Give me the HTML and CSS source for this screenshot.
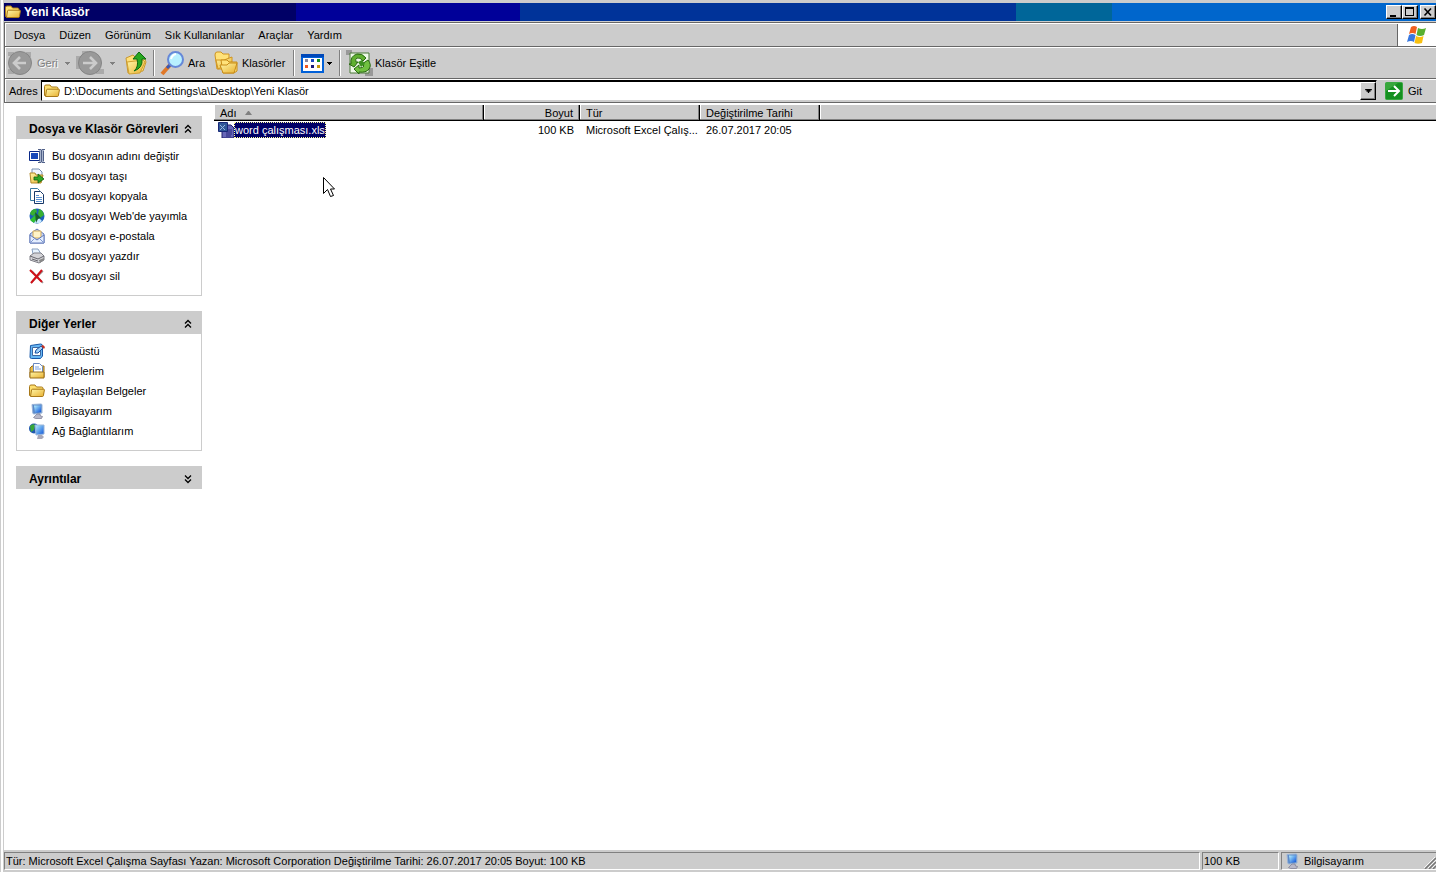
FILE: index.html
```html
<!DOCTYPE html>
<html lang="tr">
<head>
<meta charset="utf-8">
<title>Yeni Klasör</title>
<link rel="stylesheet" href="styles.css">
</head>
<body>
<svg class="defs" aria-hidden="true">
  <defs>
    <linearGradient id="gold" x1="0" y1="0" x2="1" y2="1"><stop offset="0" stop-color="#fff6a8"/><stop offset="1" stop-color="#e8b030"/></linearGradient>
    <linearGradient id="screen" x1="0" y1="0" x2="1" y2="1"><stop offset="0" stop-color="#b8f4ff"/><stop offset="1" stop-color="#0a50d8"/></linearGradient>
    <symbol id="folder" viewBox="0 0 16 16">
      <path d="M.500 3.500q0-1.500 1.500-1.500h4l1.500 2h5q1.500 0 1.500 1.500v7h-13.500z" fill="#ffe070" stroke="#a87818"/>
      <path d="M1.500 13.500l1-6.500q.2-.8 1-.8h11q1 0 .9.8l-1 5.700q-.2.8-1 .8z" fill="url(#gold)" stroke="#a87818"/>
    </symbol>
    <symbol id="folders" viewBox="0 0 24 24">
      <path d="M1 4q0-3 2-3h4l2 2h6v3l-3 12h-9z" fill="#ffe27a" stroke="#d09420"/>
      <path d="M4 18l-2-9h8l8-3v5z" fill="url(#gold)" stroke="#d09420"/>
      <path d="M7 9h6l2 2h8v9l-3 2h-11z" fill="#ffe27a" stroke="#c88c18"/>
      <path d="M6 14h7l2-2h8l-3 10h-11z" fill="url(#gold)" stroke="#c88c18"/>
    </symbol>
    <symbol id="computer" viewBox="0 0 16 16">
      <path d="M3 1.500l9-.5q1 0 1 1v8l-8 1q-1 0-1.200-1z" fill="#5a88c8" stroke="#98b4d8"/>
      <path d="M5 2.500h7v6.500l-6 .8z" fill="url(#screen)"/>
      <path d="M8 11h3l.5 2 2 .5-1 2h-6l-2-1z" fill="#b8b8c8" stroke="#787890" stroke-width=".7"/>
    </symbol>
    <symbol id="up" viewBox="0 0 10 10"><path d="M2 4.500l3-3 3 3M2 8.500l3-3 3 3" fill="none" stroke="#000" stroke-width="1.300"/></symbol>
    <symbol id="down" viewBox="0 0 10 10"><path d="M2 1.500l3 3 3-3M2 5.500l3 3 3-3" fill="none" stroke="#000" stroke-width="1.300"/></symbol>
    <symbol id="tri" viewBox="0 0 5 3"><path d="M0 0h5v1h-1v1h-1v1h-1v-1h-1v-1h-1z" fill="currentColor"/></symbol>
  </defs>
</svg>
<div class="window">
  <header class="titlebar">
    <svg class="i16"><use href="#folder"/></svg>
    <h1>Yeni Klasör</h1>
    <div class="controls">
      <button aria-label="Küçült"><svg viewBox="0 0 10 10"><path d="M1 8h6v2h-6z"/></svg></button>
      <button aria-label="Ekranı kapla"><svg viewBox="0 0 10 10"><path d="M0 0h9v9h-9zM1 2v6h7v-6z" fill-rule="evenodd"/></svg></button>
      <button class="close" aria-label="Kapat"><svg viewBox="0 0 10 10"><path d="M1.500 1.500l6.500 7M8 1.500l-6.500 7" fill="none" stroke="#000" stroke-width="1.600"/></svg></button>
    </div>
  </header>
  <div class="frame">
    <nav class="menubar">
      <button>Dosya</button><button>Düzen</button><button>Görünüm</button><button>Sık Kullanılanlar</button><button>Araçlar</button><button>Yardım</button>
      <div class="flag">
        <svg width="20" height="20" viewBox="0 0 20 20"><path d="M4 2q3-2 6 0l-1.500 7q-3-2-6.500 0z" fill="#f06020"/><path d="M11 3q4 2 8 0l-2 7q-4 2-7.500 0z" fill="#58b030"/><path d="M2 10q3-2 6.500 0l-1.500 7q-3-2-7 0z" fill="#3878e0"/><path d="M9 11q4 2 7.500 0l-1.500 7q-4 1.500-7.500 0z" fill="#f8c010"/></svg>
      </div>
    </nav>
    <div class="toolbar">
      <button class="tool off back" disabled><svg class="i26" viewBox="0 0 26 26"><path d="M1 2h6v4h-6zM19 2h5v5h-5zM1 19h6v5h-6z" fill="#aaa"/><circle cx="13" cy="13" r="11.500" fill="#999" stroke="#858585"/><path d="M19 13h-12M13 7l-6 6 6 6" fill="none" stroke="#ccc" stroke-width="2.600"/></svg><span>Geri</span><svg class="tri"><use href="#tri"/></svg></button>
      <button class="tool off fwd" aria-label="İleri" disabled><svg class="i28" viewBox="0 0 28 28"><path d="M0 7h6v-5h6v4h-4v14h-8z" fill="#aaa"/><path d="M20 20h8v5h-8z" fill="#aaa"/><circle cx="14" cy="14" r="11.500" fill="#999" stroke="#858585"/><path d="M7 14h13M14 8l6 6-6 6" fill="none" stroke="#ccc" stroke-width="2.600"/></svg><svg class="tri"><use href="#tri"/></svg></button>
      <button class="tool up" aria-label="Yukarı"><svg class="i24" viewBox="0 0 24 24"><path d="M2 7l7-3 3 3 8-1 2 5-3 9-15 2z" fill="#ffe078" stroke="#c89830"/><path d="M3 11l16-2 2 2-5 11-11 1z" fill="url(#gold)" stroke="#d0a030"/><path d="M10 20q5-4 3-12h-4l6-7 7 7h-4q1 9-8 12z" fill="#28a820" stroke="#0a6810"/></svg></button>
      <i class="sep"></i>
      <button class="tool search"><svg class="i26" viewBox="0 0 26 26"><path d="M10 15l-8 9" stroke="#e07828" stroke-width="4"/><path d="M11 14l-4 4" stroke="#3858b8" stroke-width="3"/><circle cx="15.500" cy="9.500" r="7.500" fill="#b8f0ff" stroke="#6688d8" stroke-width="2"/><path d="M11 9q1-4 5-5" fill="none" stroke="#fff" stroke-width="2"/></svg><span>Ara</span></button>
      <button class="tool list"><svg class="i24"><use href="#folders"/></svg><span>Klasörler</span></button>
      <i class="sep"></i>
      <button class="tool views" aria-label="Görünümler"><svg class="i24" viewBox="0 0 24 24"><path d="M1 3h23v19h-23z" fill="#0060d8"/><path d="M1 3h23v3h-23z" fill="#0048b8"/><path d="M3 7h19v13h-19z" fill="#fff"/><path d="M5 8h3v3h-3z" fill="#8888a0"/><path d="M11 8h3v3h-3z" fill="#1848c0"/><path d="M17 8h3v3h-3z" fill="#109020"/><path d="M5 14h3v3h-3z" fill="#f05820"/><path d="M11 14h3v3h-3z" fill="#181878"/><path d="M17 14h3v3h-3z" fill="#c89808"/></svg><svg class="tri"><use href="#tri"/></svg></button>
      <i class="sep"></i>
      <button class="tool sync"><svg class="i28" viewBox="0 0 28 28"><path d="M0 1h6v5h-6zM19 19h8v8h-8z" fill="#999"/><path d="M4 4h19v20h-19z" fill="#eef8e8" stroke="#4a7838"/><path d="M5 15q-1-8 6-10 5-1 9 4l-3 3q-3-4-6-3-2 1-1 4l2 0-4 5-5-3z" fill="#60b030" stroke="#286810"/><path d="M22 11q4 5 1 9-3 4-10 3l0 2-5-5 5-4v3q4 0 5-2l-2-2z" fill="#70c040" stroke="#286810"/><path d="M12 13l4-2 3 4-4 3z" fill="#3c9020"/></svg><span>Klasör Eşitle</span></button>
    </div>
    <form class="address">
      <label for="addr">Adres</label>
      <div class="combo">
        <svg class="i16"><use href="#folder"/></svg>
        <input id="addr" type="text" value="D:\Documents and Settings\a\Desktop\Yeni Klasör">
        <button type="button" class="drop" aria-label="Adres listesi"><svg class="tri big"><use href="#tri"/></svg></button>
      </div>
      <button type="button" class="go"><svg width="18" height="18" viewBox="0 0 18 18"><rect x=".5" y=".5" width="17" height="17" rx="1" fill="#159020" stroke="#38a840"/><path d="M1 1h12l-12 8z" fill="#50b850" opacity=".6"/><path d="M3 9h11M9 4l5 5-5 5" fill="none" stroke="#fff" stroke-width="2"/></svg><span>Git</span></button>
    </form>
  </div>
  <div class="body">
    <aside class="side">
      <section class="card">
        <h2>Dosya ve Klasör Görevleri<button aria-label="Daralt"><svg><use href="#up"/></svg></button></h2>
        <ul>
          <li><a href="#"><svg class="i16" viewBox="0 0 16 16"><path d="M.5 3.500h11v9h-11z" fill="#fff" stroke="#0a2888"/><path d="M2 5h7v6h-7z" fill="#1848b8"/><path d="M10 2h5v12h-5z" fill="#a8b4cc"/><path d="M9 1.500h3l.5.5.5-.5h3M12.500 2v12M9 14.500h3l.5-.5.5.5h3M10.500 3v10M14.500 3v10" fill="none" stroke="#506088"/></svg>Bu dosyanın adını değiştir</a></li>
          <li><a href="#"><svg class="i16" viewBox="0 0 16 16"><path d="M3 1h7l3 3v7h-10z" fill="#eef4ff" stroke="#7890b0"/><path d="M1 5h5l1 2h7l-2 8h-10z" fill="url(#gold)" stroke="#b08828"/><path d="M5 9h4v-3l6 5-6 4v-3h-4z" fill="#30a828" stroke="#106010" stroke-width=".8"/></svg>Bu dosyayı taşı</a></li>
          <li><a href="#"><svg class="i16" viewBox="0 0 16 16"><path d="M1.500.500h7l2 2v10h-9z" fill="#fff" stroke="#3878a0"/><path d="M5.500 3.500h6l3 3v9h-9z" fill="#fff" stroke="#183868"/><path d="M7 7.500h3M7 9.500h6M7 11.500h6M7 13.500h6" stroke="#5890d0"/></svg>Bu dosyayı kopyala</a></li>
          <li><a href="#"><svg class="i16" viewBox="0 0 16 16"><circle cx="8" cy="8" r="7.500" fill="#1c60b8"/><path d="M1 6q1-5 6-5l1 3-4 4zM10 1q4 1 5 6l-4 3-2-4z" fill="#38b030"/><path d="M1 12l6-6 2 3-4 6z" fill="#30c030"/><path d="M5 15l4-6 4 4-2 2z" fill="#c8e8ff"/><path d="M6 4l6 6-3 1-2 4z" fill="#186028"/></svg>Bu dosyayı Web'de yayımla</a></li>
          <li><a href="#"><svg class="i16" viewBox="0 0 16 16"><path d="M1 6l7-5 7 5v9h-14z" fill="#c8d8f8" stroke="#6078b8"/><path d="M4 3h8v7h-8z" fill="#fff4c8" stroke="#d0a858"/><path d="M1 7l7 5 7-5v8h-14z" fill="#e4eeff" stroke="#6078b8"/><path d="M1 15l5-5M15 15l-5-5" stroke="#8098d0"/></svg>Bu dosyayı e-postala</a></li>
          <li><a href="#"><svg class="i16" viewBox="0 0 16 16"><path d="M4 6l-1-5h6l3 5z" fill="#e8f4ff" stroke="#88a0c0"/><path d="M1 8l4-3h7l3 3v4l-5 3-9-3z" fill="#d4d4d8" stroke="#808088"/><path d="M1 8l8 3 6-3M3 11l6 2" fill="none" stroke="#68686f"/><path d="M10 12l5-2v2l-4 3z" fill="#888"/></svg>Bu dosyayı yazdır</a></li>
          <li><a href="#"><svg class="i16" viewBox="0 0 16 16"><path d="M3 3l11 12M14 3l-12 12" stroke="#989898" stroke-width="1.500"/><path d="M1 2l12 12M13 2l-11 13" stroke="#d01018" stroke-width="2"/></svg>Bu dosyayı sil</a></li>
        </ul>
      </section>
      <section class="card">
        <h2>Diğer Yerler<button aria-label="Daralt"><svg><use href="#up"/></svg></button></h2>
        <ul>
          <li><a href="#"><svg class="i16" viewBox="0 0 16 16"><path d="M1.500 2.500l10-1.500q2 0 2 2v10l-2 2.500h-9q-1.500 0-1.500-1.500z" fill="#68b8f4" stroke="#1858a8"/><path d="M3.500 4.500h8v8h-8z" fill="#fff" stroke="#4068a0"/><path d="M6 10l1-3 5-4 2 2-5 5z" fill="#a0d0f8" stroke="#1850a0"/><path d="M12 3l2-1 2 2-1 2z" fill="#c83020"/></svg>Masaüstü</a></li>
          <li><a href="#"><svg class="i16" viewBox="0 0 16 16"><path d="M1 5l2-2h12v11h-14z" fill="#e8bc48" stroke="#986c18"/><path d="M4.500.500h6l3 3v7h-9z" fill="#fff" stroke="#6888c0"/><path d="M6 4h4M6 6h6" stroke="#78a0e0"/><path d="M1 9h14v6h-14z" fill="url(#gold)" stroke="#986c18"/></svg>Belgelerim</a></li>
          <li><a href="#"><svg class="i16"><use href="#folder"/></svg>Paylaşılan Belgeler</a></li>
          <li><a href="#"><svg class="i16"><use href="#computer"/></svg>Bilgisayarım</a></li>
          <li><a href="#"><svg class="i16" viewBox="0 0 16 16"><circle cx="5" cy="5.500" r="5" fill="#2058b0"/><path d="M1 3q3-3 5-1l-1 5-3 2z" fill="#38a838"/><path d="M6 2h9v9l-8 1z" fill="url(#screen)" stroke="#98b4d8"/><path d="M9 12h4l2 2-2 2h-5z" fill="#a8a8b8"/></svg>Ağ Bağlantılarım</a></li>
        </ul>
      </section>
      <section class="card">
        <h2>Ayrıntılar<button aria-label="Genişlet"><svg><use href="#down"/></svg></button></h2>
      </section>
    </aside>
    <main class="files">
      <table>
        <colgroup><col class="c1"><col class="c2"><col class="c3"><col class="c4"><col></colgroup>
        <thead><tr><th>Adı<svg class="sort" viewBox="0 0 7 4"><path d="M3 0h1l3 4h-7z" fill="#808080"/></svg></th><th class="num">Boyut</th><th>Tür</th><th>Değiştirilme Tarihi</th><th class="rest"></th></tr></thead>
        <tbody><tr>
          <td><div class="file"><svg class="i16" viewBox="0 0 16 16"><path d="M4 3h9l3 3v10h-12z" fill="#6868b8" stroke="#20206c"/><path d="M8 8h6M8 10h6M8 12h6M8 14h5" stroke="#28287c"/><path d="M.500.500h9v9h-9z" fill="#305898" stroke="#182878"/><path d="M2 3l5 5M7 3l-5 5" stroke="#98b8e0"/></svg><span class="name">word çalışması.xls</span></div></td>
          <td class="num">100 KB</td><td class="kind">Microsoft Excel Çalış...</td><td>26.07.2017 20:05</td><td></td>
        </tr></tbody>
      </table>
      <svg class="cursor" viewBox="0 0 13 21"><path d="M.500.500v16l4-4 3 7 3-1-3-6.500h4z" fill="#fff" stroke="#000"/></svg>
    </main>
  </div>
  <footer class="status">
    <div class="grow">Tür: Microsoft Excel Çalışma Sayfası Yazan: Microsoft Corporation Değiştirilme Tarihi: 26.07.2017 20:05 Boyut: 100 KB</div>
    <div class="size">100 KB</div>
    <div class="zone"><svg class="i16"><use href="#computer"/></svg><span>Bilgisayarım</span><svg class="grip" viewBox="0 0 12 12"><path d="M1 12l11-11M5 12l7-7M9 12l3-3" stroke="#777" stroke-width="1.500"/><path d="M0 11l11-11M4 11l8-8M8 11l4-4" stroke="#fff" stroke-width=".8"/></svg></div>
  </footer>
</div>
</body>
</html>
```

FILE: styles.css
```css
* { box-sizing: border-box; }
body { margin: 0; background: #fff; color: #000; font: 11px/16px "Liberation Sans", Arial, sans-serif; }
button, input { font: inherit; color: inherit; margin: 0; padding: 0; border: 0; background: none; border-radius: 0; }
svg { display: block; flex: none; }
.defs { position: absolute; width: 0; height: 0; }
.i16 { width: 16px; height: 16px; }
.i24 { width: 24px; height: 24px; }
.i26 { width: 26px; height: 26px; }
.i28 { width: 28px; height: 28px; }
.tri { width: 5px; height: 3px; }
.tri.big { width: 7px; height: 4px; }

.window { min-height: 100vh; display: flex; flex-direction: column; border-left: 4px double #ccc; }
.titlebar { display: flex; align-items: center; gap: 3px; height: 21px; padding-left: 1px; border-top: 3px solid #ccc; color: #fff; background: linear-gradient(90deg, #006 292px, #009 292px 516px, #039 516px 1012px, #069 1012px 1108px, #06c 1108px); }
h1 { margin: 0; flex: 1; font-size: 12px; line-height: 18px; }
.controls { display: flex; }
.controls button { width: 16px; height: 14px; padding: 1px 2px; background: #ccc; border: 1px solid; border-color: #fff #000 #000 #fff; box-shadow: inset -1px -1px #808080; }
.controls .close { margin-left: 2px; }
.controls svg { width: 10px; height: 10px; }

.frame { background: #ccc; padding-top: 1px; }
.menubar, .toolbar, .address { display: flex; align-items: center; border-top: 1px solid #666; border-left: 1px solid #666; box-shadow: inset 1px 1px #fff; }
.menubar { height: 24px; padding: 1px 0 0 2px; }
.menubar button { padding: 0 7px; }
.flag { margin-left: auto; align-self: stretch; width: 39px; display: flex; align-items: center; justify-content: center; background: #fff; border-left: 1px solid #666; }
.toolbar { height: 32px; padding: 1px 0 0 2px; }
.tool { display: flex; align-items: center; height: 28px; }
.off { color: #808080; text-shadow: 1px 1px #fff; }
.back { gap: 4px; width: 69px; }
.back .tri { margin-left: 3px; }
.fwd { gap: 6px; width: 48px; }
.up { width: 27px; }
.sep { width: 2px; height: 26px; margin: 0 5px 0 2px; border-left: 1px solid #808080; background: #fff; }
.search { gap: 2px; width: 54px; }
.list { gap: 4px; width: 77px; }
.views { gap: 3px; width: 37px; }
.sync { gap: 1px; }
.address { height: 25px; padding: 1px 0 1px 4px; border-bottom: 1px solid #666; }
.address label { width: 32px; }
.combo { flex: 1; display: flex; align-items: center; height: 21px; padding: 0 2px; background: #fff; border: 1px solid; border-color: #000 #ccc #ccc #000; box-shadow: inset 0 1px #000; }
.combo input { flex: 1; min-width: 0; height: 17px; padding-left: 4px; outline: 0; }
.drop { display: flex; align-items: center; justify-content: center; width: 16px; height: 18px; margin-right: -2px; background: #ccc; border: 1px solid; border-color: #fff #000 #000 #fff; box-shadow: inset -1px -1px #808080; }
.go { display: flex; align-items: center; gap: 5px; width: 59px; padding-left: 8px; }

.body { flex: 1; display: flex; padding-top: 2px; }
.side { width: 210px; padding: 11px 12px; display: flex; flex-direction: column; gap: 15px; }
.card { background: #ccc; }
h2 { display: flex; align-items: center; justify-content: space-between; height: 23px; margin: 0; padding: 2px 9px 0 13px; font-size: 12px; line-height: 16px; white-space: nowrap; }
h2 svg { width: 10px; height: 10px; }
.card ul { margin: 0; padding: 7px 12px 9px; list-style: none; background: #fff; border: 1px solid #ccc; border-top: 0; }
.card a { display: flex; align-items: center; gap: 7px; height: 20px; color: inherit; text-decoration: none; white-space: nowrap; }

.files { flex: 1; position: relative; min-width: 0; }
table { width: 100%; table-layout: fixed; border-collapse: separate; border-spacing: 0; }
.c1 { width: 270px; } .c2 { width: 96px; } .c3, .c4 { width: 120px; }
th { height: 16px; padding: 0 6px; line-height: 14px; text-align: left; font-weight: normal; background: #ccc; border-bottom: 1px solid #000; border-right: 1px solid #000; box-shadow: inset -1px -1px #808080, inset 1px 0 #fff; }
th.rest { border-right: 0; box-shadow: inset 0 -1px #808080, inset 1px 0 #fff; }
.sort { display: inline-block; width: 7px; height: 4px; margin-left: 8px; vertical-align: 2px; }
td { height: 18px; padding: 0 6px; white-space: nowrap; }
td.kind { padding-right: 0; }
.num { text-align: right; }
.file { display: flex; align-items: center; margin-left: -2px; }
.name { padding: 0 1px; color: #fff; background: #006; outline: 1px dotted #ff9; outline-offset: -1px; }
.cursor { position: absolute; left: 109px; top: 72px; width: 13px; height: 21px; }

.status { display: flex; gap: 2px; height: 22px; padding: 2px 0 2px 0; background: #ccc; white-space: nowrap; }
.status > div { display: flex; align-items: center; padding-left: 1px; border: 1px solid; border-color: #808080 #fff #fff #808080; }
.grow { flex: 1; min-width: 0; overflow: hidden; }
.size { width: 77px; }
.status .zone { width: 155px; gap: 4px; padding-left: 2px; border-right: 0; }
.grip { width: 12px; height: 12px; margin-left: auto; align-self: flex-end; }
```
